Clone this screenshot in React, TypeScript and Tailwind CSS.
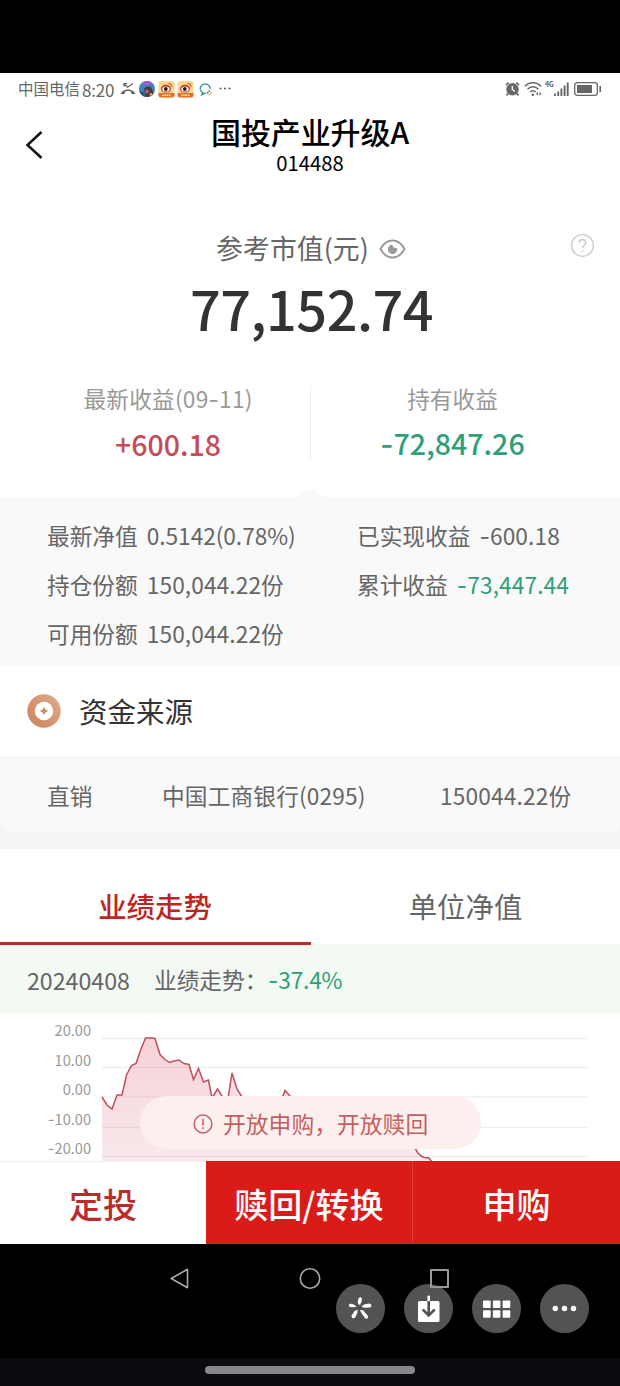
import React from "react";

const LINE =
  "102,83 107,91 112,95 117,81 122,81 126.5,61 131.5,51.5 136,49.5 141,35 145.5,24 152,24 155,24.5 160,40.5 165,45.5 169.5,48.5 174,47 179,46 184,49.5 189,50.5 193.5,65.5 198.5,54.5 203.5,68 208.5,66 212,84 217.5,75 222,82 225,92 228,84 232,59 237,75 242,83 260,110 280,90 285,76.5 290,82 310,105 350,120 390,125 415,134 418,139 421,142 424,143.5 429,144 432,148";

const TICKS = ["20.00", "10.00", "0.00", "-10.00", "-20.00"];

/** Renders a number whose minus sign is drawn with a wide dash. */
function Num({ value }: { value: string }) {
  if (!value.startsWith("-")) return <>{value}</>;
  return (
    <>
      <span className="font-[Inter]">-</span>
      {value.slice(1)}
    </>
  );
}

function Weibo() {
  return (
    <svg width="17" height="17" viewBox="0 0 17 17">
      <rect x=".5" width="16" height="16.500" rx="2.500" fill="#f9d78e" />
      <path d="M.5 12h16v2a2.500 2.500 0 0 1-2.500 2.500H3A2.500 2.500 0 0 1 .5 14z" fill="#e8702a" />
      <path d="M4 14.200h9" stroke="#fbe3b0" strokeWidth="1.500" strokeDasharray="1.6 .6" />
      <ellipse cx="8" cy="7.700" rx="5" ry="3.900" fill="#c5302b" />
      <ellipse cx="8" cy="8" rx="3.700" ry="2.600" fill="#fff" />
      <circle cx="7.800" cy="8" r="1.900" fill="#2b1a1a" />
      <path d="M10.400 2.400a3.600 3.600 0 0 1 3.600 3.800" stroke="#e0692b" strokeWidth="1.200" fill="none" />
    </svg>
  );
}

function StatusBar() {
  return (
    <div className="flex h-8 items-center justify-between pl-[18px] pr-[18px] text-[#666]">
      <div className="flex items-center">
        <span className="w-[62px] whitespace-nowrap text-[15.500px]">中国电信</span>
        <span className="ml-[2px] w-[35px] whitespace-nowrap text-[17px] tracking-[-0.2px]">8:20</span>
        <svg className="ml-[3px]" width="16" height="16" viewBox="0 0 16 16" fill="none" stroke="#666">
          <path d="M4 2.500l3.600 3.700 5.400-3.700M4 5.600V2.500h3.200" strokeWidth="1.200" />
          <path d="M.8 13.300C1.500 7 14.500 7 15.200 13.300l-3.700-.3-.6-2.500c-1.900-.6-3.900-.6-5.800 0L4.500 13z" fill="#666" stroke="none" />
        </svg>
        <svg className="ml-[3px]" width="16" height="16" viewBox="0 0 16 16">
          <defs>
            <clipPath id="avatar"><circle cx="8" cy="8" r="8" /></clipPath>
          </defs>
          <g clipPath="url(#avatar)">
            <rect width="16" height="16" fill="#3e84b5" />
            <path d="M3 0h10l-1 3-4 2-4-2z" fill="#a25ccb" />
            <path d="M0 10l5 1 2 5H0z" fill="#2b5b86" />
            <path d="M5 9c0-4 7-5 8-1l2 5-4 3H7z" fill="#493945" />
            <circle cx="8" cy="10.500" r="2" fill="#99685a" />
            <circle cx="12" cy="13.500" r="1.400" fill="#e2a64e" />
          </g>
        </svg>
        <span className="ml-[3px]"><Weibo /></span>
        <span className="ml-[2px]"><Weibo /></span>
        <svg className="ml-[4px]" width="15" height="15" viewBox="0 0 15 15" fill="none">
          <path d="M8 11.300a5 4.700 0 1 1 4.200-4.300M4.600 10.800l-.9 2 2.700-1.200" stroke="#4495ae" strokeWidth="1.400" />
          <circle cx="11.300" cy="9" r="1" fill="#4ca77f" />
          <circle cx="9.700" cy="10.800" r="1" fill="#3d85c6" />
          <circle cx="13" cy="10.800" r="1" fill="#e9b03c" />
          <circle cx="11.300" cy="12.400" r="1" fill="#e7b852" />
        </svg>
        <svg className="ml-[6px]" width="12" height="4" viewBox="0 0 12 4" fill="#666">
          <circle cx="1.500" cy="1.500" r="1.100" /><circle cx="6" cy="1.500" r="1.100" /><circle cx="10.500" cy="1.500" r="1.100" />
        </svg>
      </div>
      <div className="flex items-center">
        <svg width="15" height="16" viewBox="0 0 15 16">
          <path d="M1 4.200L3.600 1.500M14 4.200l-2.600-2.700M2.800 12.500L1.500 14.500M12.200 12.500l1.300 2" stroke="#666" strokeWidth="1.700" />
          <circle cx="7.500" cy="8.300" r="6.200" fill="#666" />
          <path d="M7.300 4.800v3.700l2.600 2" stroke="#fff" strokeWidth="1.300" fill="none" />
        </svg>
        <svg className="ml-[4px]" width="18" height="16" viewBox="0 0 18 16" fill="none" stroke="#666" strokeWidth="1.500">
          <path d="M1 5.200c4.500-4.600 11.500-4.600 16 0M3.600 8.200c3-3.300 7.800-3.300 10.800 0M6.200 11c1.600-1.700 4-1.700 5.600 0" />
          <circle cx="8.800" cy="13.700" r="1.300" fill="#666" stroke="none" />
          <path d="M14 10.800l-2 2 2 2zM15.500 10.800l2 2-2 2z" fill="#666" stroke="none" />
        </svg>
        <span className="mb-[9px] ml-[3px] w-[9px] text-[7px] font-bold leading-none tracking-[-0.3px]">4G</span>
        <svg width="15" height="15" viewBox="0 0 15 15" stroke="#666" strokeWidth="1.900">
          <path d="M1 14v-2.500M4.200 14V9.500M7.400 14V6.500M10.600 14V3.500M13.700 14V.5" />
        </svg>
        <svg className="ml-[5px]" width="28" height="14" viewBox="0 0 28 14">
          <rect x=".7" y=".7" width="22.600" height="12.600" rx="2.600" fill="none" stroke="#666" strokeWidth="1.300" />
          <rect x="3" y="3" width="15" height="8" fill="#666" />
          <path d="M26.200 4v6" stroke="#666" strokeWidth="1.700" />
        </svg>
      </div>
    </div>
  );
}

function Stat({ label, value, tone }: { label: string; value: string; tone: string }) {
  return (
    <div className="flex h-[49px] items-center whitespace-pre text-[22.700px] text-[#666]">
      {label}
      <span className={`ml-[9px] ${tone}`}><Num value={value} /></span>
    </div>
  );
}

function RoundButton({ children }: { children: React.ReactNode }) {
  return (
    <div className="flex size-[49px] items-center justify-center rounded-full bg-[#535353]">
      <svg width="49" height="49" viewBox="0 0 49 49">{children}</svg>
    </div>
  );
}

export default function App() {
  return (
    <div lang="zh-CN" className="flex h-[1386px] w-[620px] flex-col overflow-hidden bg-black font-['Noto_Sans_CJK_SC',sans-serif] leading-none">
      <div className="h-[73px] shrink-0" />
      <main className="flex h-[1171px] shrink-0 flex-col bg-white">
        <StatusBar />
        <header className="grid h-[85px] grid-cols-[100px_1fr_100px]">
          <svg className="ml-[24px] mt-[24px]" width="20" height="32" viewBox="0 0 20 32" fill="none">
            <path d="M17.500 3L3.500 16l14 13" stroke="#111" strokeWidth="2.500" />
          </svg>
          <div className="flex flex-col items-center text-black">
            <h1 className="mt-[12px] h-[29px] whitespace-nowrap text-[30px] font-medium leading-[29px] tracking-[-0.1px]">国投产业升级A</h1>
            <div className="mt-[6px] text-[20.300px] leading-[20px]">014488</div>
          </div>
        </header>

        <section className="flex h-[307px] flex-col">
          <div className="grid h-[72px] grid-cols-[100px_1fr_100px]">
            <span />
            <div className="flex items-center justify-center pl-[2px] pt-[44px] text-[26.800px] text-[#666]">
              <span className="whitespace-nowrap tracking-[0.1px]">参考市值(元)</span>
              <svg className="ml-[10px] mt-[2px]" width="27" height="20" viewBox="0 0 27 20">
                <path d="M1.500 10C7.500-1.300 19.500-1.300 25.500 10c-6 11.300-18 11.300-24 0z" fill="none" stroke="#999" strokeWidth="1.900" />
                <path d="M13.500 5.600c0 2.500 1 3.900 4.600 3.500a4.700 4.700 0 1 1-4.600-3.500z" fill="#999" />
              </svg>
            </div>
            <svg className="ml-[50px] mt-[43px]" width="25" height="25" viewBox="0 0 25 25" fill="none" stroke="#ccc">
              <circle cx="12.500" cy="12.500" r="10.900" strokeWidth="1.400" />
              <path d="M9.200 9.800c0-4.200 6.600-4.200 6.600-.2 0 2.500-3.300 2.800-3.300 5.400" strokeWidth="1.600" />
              <circle cx="12.500" cy="18" r="1" fill="#ccc" stroke="none" />
            </svg>
          </div>
          <div className="mt-[16px] h-[60px] pl-[3px] text-center text-[54px] font-medium leading-[60px] tracking-[-0.5px] text-[#333]">77,152.74</div>
          <div className="mt-[48px] grid h-[73px] grid-cols-[311px_309px]">
            <div className="flex flex-col items-center border-r border-[#eee]">
              <div className="ml-[26px] mt-[2px] text-[22.700px] leading-[22px] tracking-[0.2px] text-[#999]">最新收益(09<span className="font-[Inter]">-</span>11)</div>
              <div className="ml-[26px] mt-[18px] text-[28.500px] font-medium leading-[29px] text-[#c44d58]">+600.18</div>
            </div>
            <div className="flex flex-col items-center pr-[26px]">
              <div className="mt-[2px] text-[22.700px] leading-[22px] text-[#999]">持有收益</div>
              <div className="mt-[18px] text-[28.600px] font-medium leading-[29px] text-[#2f9f77]"><Num value="-72,847.26" /></div>
            </div>
          </div>
          <svg className="mx-auto mt-auto" width="30" height="8" viewBox="0 0 30 8">
            <path d="M0 8C5 7 11 .5 15 .5S25 7 30 8z" fill="#f9f9f9" />
          </svg>
        </section>

        <section className="grid h-[168px] grid-cols-[310px_1fr] bg-[#f9f9f9] pl-[47px] pt-[15px]">
          <div>
            <Stat label="最新净值" value="0.5142(0.78%)" tone="text-[#666] tracking-[-0.05px]" />
            <Stat label="持仓份额" value="150,044.22份" tone="text-[#666] tracking-[0.1px]" />
            <Stat label="可用份额" value="150,044.22份" tone="text-[#666] tracking-[0.1px]" />
          </div>
          <div>
            <Stat label="已实现收益" value="-600.18" tone="text-[#666] tracking-[0.1px]" />
            <Stat label="累计收益" value="-73,447.44" tone="text-[#2f9f77] tracking-[0.1px]" />
          </div>
        </section>

        <section className="flex h-[91px] items-center pl-[27px]">
          <svg width="34" height="34" viewBox="0 0 34 34">
            <defs>
              <linearGradient id="coin" x1="1" y1="0" x2="0" y2="1">
                <stop offset="0" stopColor="#e0ad8d" /><stop offset="1" stopColor="#cb8059" />
              </linearGradient>
            </defs>
            <circle cx="17" cy="17" r="16.700" fill="url(#coin)" />
            <circle cx="17" cy="17" r="9.200" fill="#fff" />
            <path d="M17 12.700c.9 2.500 1.800 3.400 4.300 4.300-2.500.9-3.400 1.800-4.300 4.300-.9-2.500-1.800-3.400-4.300-4.300 2.500-.9 3.400-1.800 4.300-4.300z" fill="#cf8b66" />
          </svg>
          <h2 className="ml-[18px] mt-[2px] text-[28.500px] text-[#333]">资金来源</h2>
        </section>
        <div className="bg-[#f5f5f5]">
          <section className="flex h-[77px] items-center rounded-b-xl bg-[#f9f9f9] pl-[47px] pt-[3px] text-[22.700px] text-[#666]">
            <span className="w-[115px]">直销</span>
            <span className="w-[278px] tracking-[0.15px]">中国工商银行(0295)</span>
            <span className="tracking-[0.15px]">150044.22份</span>
          </section>
          <div className="h-[16px]" />
        </div>

        <nav className="grid h-[95px] grid-cols-2 text-center text-[28.400px]">
          <div className="relative pt-[43px] font-medium text-[#be2422]">
            业绩走势
            <span className="absolute -bottom-px left-0 h-[3px] w-[311px] bg-[#b92e2c]" />
          </div>
          <div className="pl-[1px] pt-[43px] text-[#666]">单位净值</div>
        </nav>
        <div className="flex h-[70px] items-center bg-[#f3f9f3] pl-[27px] pt-[3px] text-[22.700px] text-[#666]">
          <span className="w-[127px] text-[23.200px]">20240408</span>
          <span className="w-[114px]">业绩走势：</span>
          <span className="tracking-[-0.2px] text-[#2f9f77]"><Num value="-37.4%" /></span>
        </div>

        <div className="relative h-[147px]">
          <svg className="block" width="620" height="147" viewBox="0 0 620 147">
            <path d="M102 24.500h486M102 53.500h486M102 82.800h486M102 113.300h486M102 142.500h486" stroke="#eee" strokeWidth="1.300" />
            <defs>
              <linearGradient id="fade" x1="0" y1="0" x2="0" y2="1">
                <stop offset="0" stopColor="#dc5069" stopOpacity=".26" /><stop offset="1" stopColor="#cc5068" stopOpacity=".12" />
              </linearGradient>
            </defs>
            <polygon points={`${LINE} 432,150 102,150`} fill="url(#fade)" />
            <polyline points={LINE} fill="none" stroke="#be4f5c" strokeWidth="1.500" />
          </svg>
          <div className="absolute left-0 top-[1px] w-[91px] text-right text-[14.600px] text-[#999]">
            {TICKS.map((t) => (
              <div key={t} className="h-[29.500px] leading-[29.500px]"><Num value={t} /></div>
            ))}
          </div>
          <div className="absolute left-[140px] top-[82px] flex h-[53px] w-[341px] items-center rounded-full bg-[#feefef] pl-[53px] text-[#c35f5f]">
            <svg className="mt-[3px]" width="20" height="20" viewBox="0 0 20 20">
              <circle cx="10" cy="10" r="8.900" fill="none" stroke="#c35f67" strokeWidth="1.500" />
              <path d="M10 4.700v6.800M10 13.200v1.800" stroke="#c35f67" strokeWidth="1.600" />
            </svg>
            <span className="ml-[10px] mt-[4px] whitespace-nowrap text-[22.800px]">开放申购，开放赎回</span>
          </div>
        </div>

        <footer className="grid h-[83px] shrink-0 grid-cols-[206px_207px_207px] text-center text-[34px] font-medium leading-[86px]">
          <div className="h-[83px] border-t border-[#eee] leading-[84px] text-[#b92c2b]">定投</div>
          <div className="h-[83px] border-r border-[#e33a37] bg-[#da1c19] text-white">赎回/转换</div>
          <div className="h-[83px] bg-[#da1c19] text-white">申购</div>
        </footer>
      </main>

      <div className="relative h-[114px] shrink-0">
        <svg className="block" width="620" height="50" viewBox="0 0 620 50" fill="none" stroke="#aaa" strokeWidth="1.600">
          <path d="M187.500 25.300v18.400L171.200 34.500z" strokeLinejoin="round" />
          <circle cx="310" cy="34.500" r="9.700" />
        </svg>
        <div className="absolute left-[335.500px] top-[39.500px] flex gap-[19px]">
          <RoundButton>
            <g fill="#fff">
              <path d="M22.500 20.500l-.8-2.500.9-3.500q1.500-2.300 3.200-.6l-.2 3.300-1.300 3.600z" />
              <path d="M25.500 22.500l2.500-2 5-.9q2.600.3 2.500 2.300-.6 1.600-2.500 1.500l-5 .3z" />
              <path d="M24 26l3 .3 4.900 5.500q.8 2-.7 2.800-1.500.7-2.500-.9l-3.600-5.200z" />
              <path d="M21.500 25.500l-.2 3.500-2 4.300q-1.300 1.500-3 .7-1.400-1.100-.4-2.800l2.400-4z" />
              <path d="M20.500 22.800l-3 .4-3.500-.3q-1.800-.9-1-2.500 1-1 3.500-.3l2.500 1.100z" />
            </g>
          </RoundButton>
          <RoundButton>
            <rect x="14" y="17" width="21.500" height="21" rx="1.500" fill="#fff" />
            <path d="M24.700 17v14M18.700 25.500l6 6 6-6" fill="none" stroke="#535353" strokeWidth="2.600" />
            <path d="M24.700 11.700V17" stroke="#fff" strokeWidth="2.600" />
          </RoundButton>
          <RoundButton>
            <g fill="#fff">
              <rect x="11" y="16.500" width="7.700" height="7.500" rx="1" /><rect x="20.900" y="16.500" width="7.500" height="7.500" rx="1" /><rect x="30.600" y="16.500" width="7.700" height="7.500" rx="1" />
              <rect x="11" y="26.300" width="7.700" height="7.500" rx="1" /><rect x="20.900" y="26.300" width="7.500" height="7.500" rx="1" /><rect x="30.600" y="26.300" width="7.700" height="7.500" rx="1" />
            </g>
          </RoundButton>
          <RoundButton>
            <g fill="#fff"><circle cx="15.300" cy="24.500" r="2.700" /><circle cx="24.500" cy="24.500" r="2.700" /><circle cx="33.500" cy="24.500" r="2.700" /></g>
          </RoundButton>
        </div>
        <span className="absolute left-[430px] top-[25px] h-[19px] w-[19px] rounded-[1px] border-2 border-[#999]" />
      </div>
      <div className="flex h-[28px] shrink-0 justify-center bg-[#0b0c11] pt-[8px]">
        <div className="h-[8px] w-[210px] rounded-full bg-[#87878c]" />
      </div>
    </div>
  );
}
